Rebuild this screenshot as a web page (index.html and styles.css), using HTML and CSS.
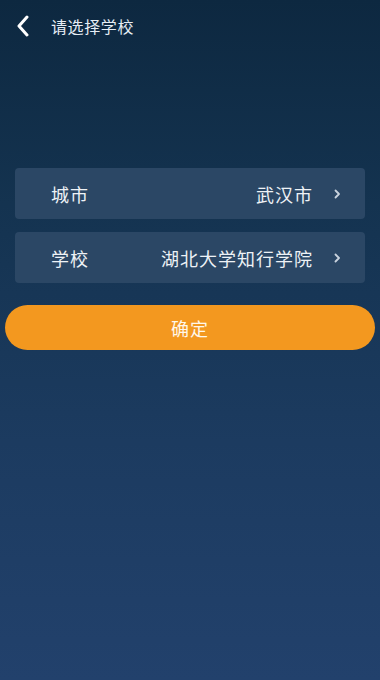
FILE: index.html
```html
<!DOCTYPE html>
<html lang="zh-CN">
<head>
  <meta charset="UTF-8" />
  <title>请选择学校</title>
  <link rel="stylesheet" href="styles.css">
</head>
<body>

  <!-- top bar -->
  <div class="topbar">
    <span class="back">
      <svg width="14" height="22" viewBox="0 0 14 22"><path d="M11 2 L3 11 L11 20" fill="none" stroke="#ffffff" stroke-width="3" stroke-linecap="round" stroke-linejoin="round"/></svg>
    </span>
    <span class="title">请选择学校</span>
  </div>

  <!-- pickers -->
  <div class="list">
    <div class="row">
      <span class="label">城市</span>
      <span class="value">武汉市</span>
      <span class="arrow">
        <svg width="7" height="10" viewBox="0 0 7 10"><path d="M1.5 1.5 L5 5 L1.5 8.5" fill="none" stroke="#c9d3de" stroke-width="1.8" stroke-linecap="round" stroke-linejoin="round"/></svg>
      </span>
    </div>
    <div class="row">
      <span class="label">学校</span>
      <span class="value">湖北大学知行学院</span>
      <span class="arrow">
        <svg width="7" height="10" viewBox="0 0 7 10"><path d="M1.5 1.5 L5 5 L1.5 8.5" fill="none" stroke="#c9d3de" stroke-width="1.8" stroke-linecap="round" stroke-linejoin="round"/></svg>
      </span>
    </div>
  </div>

  <button class="ok-btn">确定</button>

</body>
</html>
```

FILE: styles.css
```css
body {
  margin: 0;
  min-height: 680px;
  font-family: "Noto Sans CJK SC", "Noto Sans", sans-serif;
  background: linear-gradient(180deg, #0d2840 0%, #143350 30%, #1c3b60 65%, #22416c 100%);
  color: #ffffff;
}

.topbar {
  height: 52px;
  display: flex;
  align-items: center;
  padding-left: 16px;
}

.back {
  display: flex;
  width: 35px;
}

.title {
  font-size: 16px;
  letter-spacing: 0.6px;
  color: #e6edf4;
}

.list {
  margin: 116px 15px 0;
  display: flex;
  flex-direction: column;
  gap: 13px;
}

.row {
  height: 51px;
  display: flex;
  align-items: center;
  padding: 0 24px 0 36px;
  background: #2b4765;
  border-radius: 4px;
  font-size: 18px;
  letter-spacing: 1px;
}

.label {
  flex: 1;
  color: #eef2f6;
}

.value {
  color: #eef2f6;
}

.arrow {
  display: flex;
  margin-left: 21px;
}

.ok-btn {
  display: block;
  width: 370px;
  height: 45px;
  margin: 22px 5px 0;
  border: none;
  border-radius: 23px;
  background: #f3981f;
  color: #fff7ea;
  font-family: "Noto Sans CJK SC", "Noto Sans", sans-serif;
  font-size: 18px;
  letter-spacing: 1px;
}
```
